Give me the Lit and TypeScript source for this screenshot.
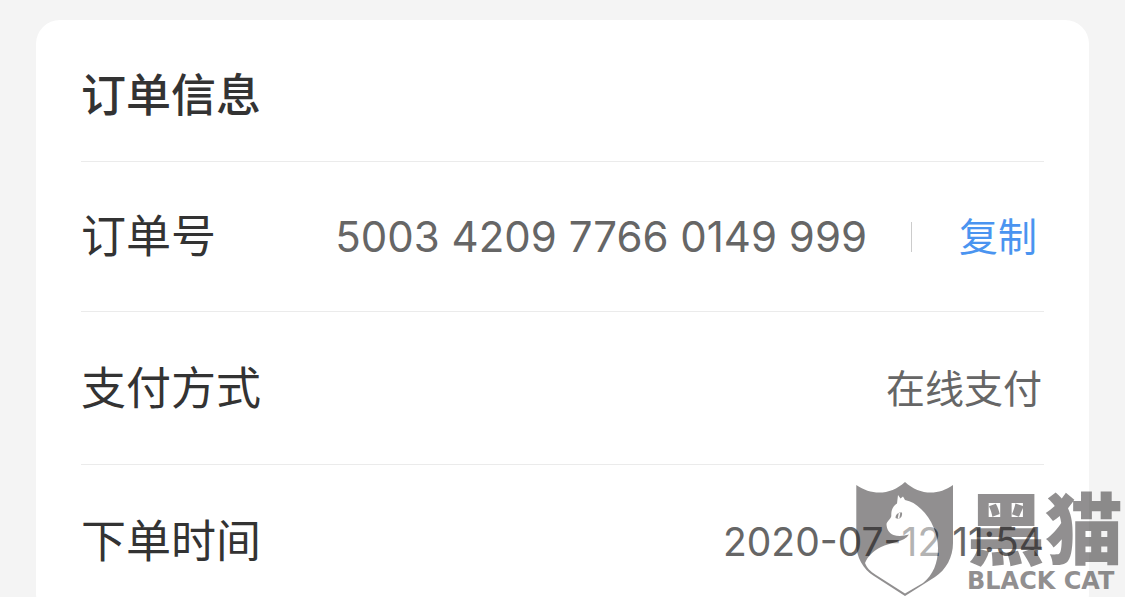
import { LitElement, html, css, svg } from "lit";
import { customElement, property } from "lit/decorators.js";

@customElement("order-row")
class OrderRow extends LitElement {
  @property() label = "";

  static styles = css`
    :host {
      display: flex;
      align-items: center;
      justify-content: space-between;
      padding: 47px 0 45px;
      border-top: 1px solid #ebebeb;
    }
    :host([compact]) {
      padding: 45px 0 44px;
    }
    .label {
      color: #333;
      font-size: 45px;
      line-height: 60px;
      white-space: nowrap;
    }
    .value {
      display: flex;
      align-items: center;
      color: #666;
      font-size: 39px;
      line-height: 60px;
      white-space: nowrap;
    }
  `;

  render() {
    return html`
      <span class="label">${this.label}</span>
      <span class="value"><slot></slot></span>
    `;
  }
}

@customElement("cat-badge")
class CatBadge extends LitElement {
  static styles = css`
    :host {
      display: flex;
      gap: 12px;
      opacity: 0.5;
      color: #252223;
      pointer-events: none;
    }
    .shield {
      width: 100px;
      height: 116px;
      flex: none;
    }
    .words {
      display: flex;
      flex-direction: column;
      white-space: nowrap;
    }
    .name {
      font: 900 78px/88px "Noto Sans CJK SC", sans-serif;
    }
    .latin {
      font: 700 24px/24px "DejaVu Sans", sans-serif;
    }
  `;

  render() {
    return html`
      ${svg`<svg class="shield" viewBox="0 0 100 116" aria-hidden="true">
        <path fill="#252223" d="M1.300 4C17 15 36 14 50 1C64 14 83 15 98 4V62C98 76 91 89 80 96L50 115L19 95C8 88 1.300 76 1.300 63Z"/>
        <path fill="#fff" d="M43 14L45.500 17.500L48 15.500L50 19C56 20 61 23 66 28C77 38 83 54 83 67C83 82 78 94 68 102L50 112.500L21 94C15 90 12 87 10 82C13 75 18 70 26 66C35 61 49 62 54 53.500C49 55 43 55.500 38.500 54C34 52 31.500 48 31.500 43C32 40 36 38 36.300 35C36 29 38 25 42 22.500Z"/>
        <path fill="#252223" d="M40.500 37C40.500 33.500 43 31 47 31.500C47.500 36 45 39 40.500 37Z"/>
        <path stroke="#fff" stroke-width="1.500" d="M44.500 32L43.500 37.500"/>
      </svg>`}
      <div class="words">
        <span class="name">黑猫</span>
        <span class="latin">BLACK CAT</span>
      </div>
    `;
  }
}

@customElement("app-root")
class AppRoot extends LitElement {
  static styles = css`
    :host {
      display: block;
      position: relative;
      box-sizing: border-box;
      height: 100vh;
      overflow: hidden;
      padding: 20px 36px 0;
      background: #f4f4f4;
      font-family: Inter, "Noto Sans CJK SC", sans-serif;
    }
    .card {
      padding: 0 45px;
      border-radius: 24px;
      background: #fff;
    }
    .title {
      margin: 0;
      padding: 46px 0 35px;
      color: #333;
      font-size: 45px;
      line-height: 60px;
      font-weight: 500;
    }
    .number {
      font-size: 42px;
    }
    .method {
      padding-right: 2px;
    }
    .copy {
      margin-left: 44px;
      padding: 0 7px 0 48px;
      border: 0;
      background: linear-gradient(#ccc, #ccc) left center / 1px 30px no-repeat;
      color: #4a94f0;
      font: inherit;
      cursor: pointer;
    }
    .mark {
      position: absolute;
      right: 2px;
      top: 481px;
    }
  `;

  render() {
    return html`
      <main class="card">
        <h1 class="title">订单信息</h1>
        <order-row label="订单号" compact>
          <span class="number">5003 4209 7766 0149 999</span>
          <button class="copy" type="button">复制</button>
        </order-row>
        <order-row label="支付方式"><span class="method">在线支付</span></order-row>
        <order-row label="下单时间"><time datetime="2020-07-12T11:54">2020-07-12 11:54</time></order-row>
      </main>
      <cat-badge class="mark"></cat-badge>
    `;
  }
}
